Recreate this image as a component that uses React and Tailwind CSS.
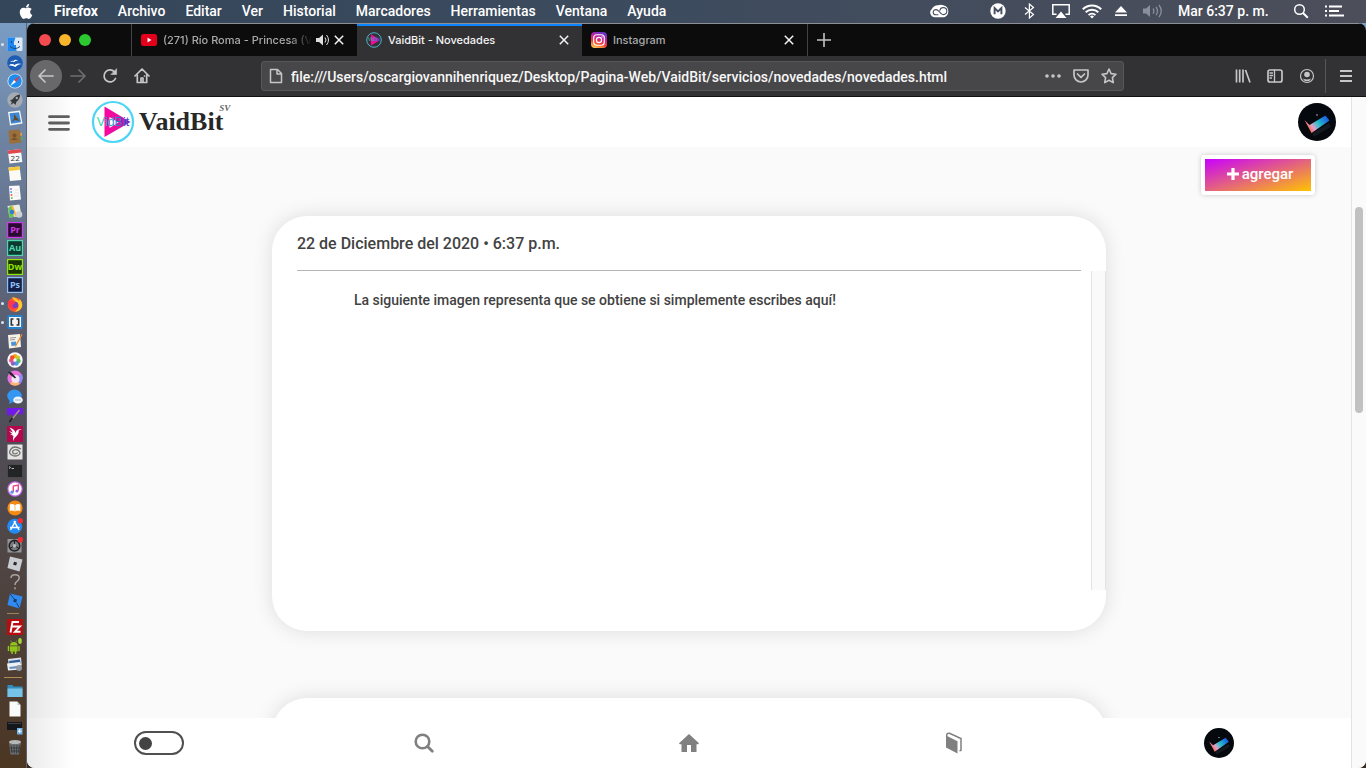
import React from "react";
import { FaApple } from "react-icons/fa";

/* ---------- menu bar ---------- */

const menus = ["Archivo", "Editar", "Ver", "Historial", "Marcadores", "Herramientas", "Ventana", "Ayuda"];

function StatusButton({ label, className, children }) {
  return (
    <button type="button" aria-label={label} className={`flex h-full items-center justify-center ${className}`}>
      {children}
    </button>
  );
}

function MenuBar() {
  return (
    <header className="flex h-[23px] shrink-0 items-center justify-between bg-linear-to-r from-[#34465a] via-[#3d4b5e] to-[#4c4e5a] pb-px font-[Roboto,sans-serif] text-sm font-medium text-white">
      <nav aria-label="Menú" className="flex items-center gap-5 pl-[18px]">
        <button type="button" aria-label="Apple" className="flex w-4 justify-center">
          <FaApple className="size-[17px]" />
        </button>
        <button type="button" className="font-bold leading-5">Firefox</button>
        {menus.map((m) => (
          <button type="button" key={m} className="leading-5">{m}</button>
        ))}
      </nav>
      <div className="flex h-full items-center pr-[22px]">
        <StatusButton label="Creative Cloud" className="w-[60px] justify-start!">
          <svg viewBox="0 0 20 14" className="h-[14px] w-5" fill="none" strokeLinecap="round">
            <path d="M5.500 13.200A4.800 4.800 0 0 1 2 4.700 6.500 6.500 0 0 1 8 1.200q3-.9 6 .3a6.200 6.200 0 0 1 .3 11.700z" fill="#fff" />
            <path d="M8 10.800H5.800a2.600 2.600 0 0 1 0-5.200q1.400 0 2.400 1l3 3q1 1 2.200 1a3.500 3.500 0 1 0-3.500-4.300" stroke="#465062" strokeWidth="1.100" />
          </svg>
        </StatusButton>
        <StatusButton label="Mega" className="w-[34px] justify-start!">
          <svg viewBox="0 0 16 16" className="size-4">
            <circle cx="8" cy="8" r="7.700" fill="#fff" />
            <path d="M4.600 11.200V5l3.400 3.400L11.400 5v6.200" fill="none" stroke="#454f60" strokeWidth="1.900" />
          </svg>
        </StatusButton>
        <StatusButton label="Bluetooth" className="w-[25px] justify-start!">
          <svg viewBox="0 0 11 16" className="h-4 w-[11px]" fill="none" stroke="currentColor" strokeWidth="1.200">
            <path d="M1 4.500 9.500 11.500 5.400 15V1l4.100 3.500L1 11.500" />
          </svg>
        </StatusButton>
        <StatusButton label="AirPlay" className="w-6">
          <svg viewBox="0 0 18 15" className="h-[15px] w-[18px]">
            <path d="M4.500 10.300H.800V.800h16.400v9.500h-3.700" fill="none" stroke="currentColor" strokeWidth="1.500" />
            <path d="M9 7.500 14.500 14h-11z" fill="currentColor" />
          </svg>
        </StatusButton>
        <StatusButton label="Wi-Fi" className="w-[38px]">
          <svg viewBox="0 0 20 15" className="h-[15px] w-5" fill="none" stroke="currentColor" strokeWidth="2">
            <path d="M.8 5.300a13 13 0 0 1 18.400 0M3.700 8.200a9 9 0 0 1 12.600 0M6.600 11.100a4.900 4.900 0 0 1 6.800 0" />
            <path d="m10 14.500-2-2a3 3 0 0 1 4 0z" fill="currentColor" stroke="none" />
          </svg>
        </StatusButton>
        <StatusButton label="Expulsar" className="w-5">
          <svg viewBox="0 0 12 12" className="size-3" fill="currentColor">
            <path d="m6 1 6 6.500H0zM0 9.300h12v1.800H0z" />
          </svg>
        </StatusButton>
        <StatusButton label="Volumen" className="w-[43px]">
          <svg viewBox="0 0 22 14" className="h-[14px] w-[22px] text-[#87909c]">
            <path d="M1 4.500h3L8 1v12L4 9.500H1z" fill="currentColor" />
            <path d="M11 4.500q1.800 2.500 0 5M14 2.800q3 4.200 0 8.400M17 1q4.500 6 0 12" fill="none" stroke="currentColor" strokeWidth="1.300" />
          </svg>
        </StatusButton>
        <span className="w-[112px] whitespace-nowrap pl-1 leading-5">Mar 6:37 p. m.</span>
        <StatusButton label="Buscar" className="w-[30px]">
          <svg viewBox="0 0 16 16" className="size-4" fill="none" stroke="currentColor" strokeWidth="1.500">
            <circle cx="6.500" cy="6.500" r="4.800" />
            <path d="m10 10 4.800 4.800" strokeWidth="2" />
          </svg>
        </StatusButton>
        <StatusButton label="Centro de notificaciones" className="w-7 justify-end!">
          <svg viewBox="0 0 19 12" className="h-3 w-[19px]" fill="currentColor">
            <path d="M0 .5h2v2H0zM0 5h2v2H0zM0 9.500h2v2H0zM4 .5h13v2H4zM4 5h10v2H4zM4 9.500h15v2H4z" />
          </svg>
        </StatusButton>
      </div>
    </header>
  );
}

/* ---------- dock ---------- */

function Adobe({ text, color, bg }) {
  return (
    <>
      <rect x=".6" y=".6" width="14.800" height="14.800" fill={bg} stroke={color} strokeWidth="1.200" />
      <text x="8" y="11.300" fontSize="9" fontWeight="700" fontFamily="Open Sans, sans-serif" textAnchor="middle" fill={color}>{text}</text>
    </>
  );
}

const Badge = () => <circle cx="13.300" cy="2.700" r="2.700" fill="#f32c36" />;

const dockTop = [
  ["Finder", <><rect x=".5" y="1.500" width="15" height="13.500" rx="1" fill="#dce9f5" /><path d="M.5 1.500h8Q6.500 6 7 9h2q-.3 3 .7 6H.5z" fill="#1e86f0" /><path d="M3 10.500q5 4 10 0" stroke="#164a80" fill="none" /><path d="M4.500 5v2M11.500 5v2" stroke="#164a80" /></>, true],
  ["OpenOffice", <><circle cx="8" cy="8" r="7.800" fill="#1d5cb5" /><path d="M3 7q2-2 3.500-1Q8 4 11 5.500 8 5.500 7 7 5 6 3 7m-1.500 3.500Q5 8 7.500 10 10 7.500 15 9q-4 0-6.500 3Q5.500 10 1.500 10.500" fill="#fff" /></>],
  ["Safari", <><circle cx="8" cy="8" r="7.600" fill="#dbe1e8" /><circle cx="8" cy="8" r="6.700" fill="#1f8df0" /><path d="M13 3 9 9 7 7z" fill="#f0353a" /><path d="m3 13 4-6 2 2z" fill="#fff" /></>],
  ["Launchpad", <><circle cx="8" cy="8" r="7.700" fill="#a5abb1" /><path d="M13 2.500Q8 3 6 7L3 8.500 5 10l-1.500 3L6.500 11l2 2 .8-3Q13 7 13 2.500" fill="#33383d" /><circle cx="9.800" cy="6" r="1.200" fill="#a5abb1" /></>],
  ["Mail", <><path d="m1 2 12-1.500 2.500 13L3 15.500z" fill="#f6f7f7" /><path d="m2.500 3.300 9.500-1 2 10-10 1.500z" fill="#3f87d1" /><path d="m7 4 3 4 3 3-5-1-4 2 3-3z" fill="#634a2b" /></>],
  ["Contactos", <><path d="m1.500 1.500 11-1 2 13-12 1.500z" fill="#9b6e3d" /><path d="m13 4 2-.3v3l-1.500.3z" fill="#d99c40" /><path d="m13.500 8 2-.2v3l-1.500.2z" fill="#58ad5a" /><circle cx="7.500" cy="6.500" r="2" fill="#76502b" /><path d="M4 11q3-4 7 0z" fill="#76502b" /></>],
  ["Calendario", <><path d="m.8 2.500 13-1.500 1.500 13L2.500 15.500z" fill="#f8f8f8" /><path d="m.8 2.500 13-1.500.5 3.500-13 1.500z" fill="#e0464b" /><text x="8.200" y="13" fontSize="8" fontFamily="Open Sans, sans-serif" textAnchor="middle" fill="#333">22</text></>],
  ["Notas", <><path d="m1.500 1.500 11-1 1.800 13.500-11.300 1z" fill="#fbfaf5" /><path d="m1.500 1.500 11-1 .5 3.200-11 1.200z" fill="#f6c936" /></>],
  ["Recordatorios", <><path d="m2 1 10.500-.5 1.500 14-11 1z" fill="#fafafa" /><g><circle cx="4" cy="4" r="1" fill="#a56bd8" /><circle cx="4.200" cy="7" r="1" fill="#48a7f0" /><circle cx="4.500" cy="10" r="1" fill="#f25b38" /><circle cx="4.800" cy="13" r="1" fill="#70bf50" /></g><path d="M7 5h5M7 8h5M7 11h5" stroke="#ddd" strokeWidth=".7" /></>],
  ["Mapas", <><path d="m.5 3 12-1.500 2 11.500-12 1.500z" fill="#e9eee2" /><path d="m1 5 4-3 2 12-5 .5z" fill="#6ac25d" /><path d="m5 3 4 10" stroke="#f6b23c" strokeWidth="2" /><circle cx="5" cy="9" r="2.200" fill="#327bdc" /><circle cx="12" cy="11.500" r="3.300" fill="#cdd1d3" /></>],
  ["Premiere Pro", <Adobe text="Pr" color="#d23be8" bg="#2b0b33" />],
  ["Audition", <Adobe text="Au" color="#4fd6ac" bg="#0c3a31" />],
  ["Dreamweaver", <Adobe text="Dw" color="#91e500" bg="#183204" />],
  ["Photoshop", <Adobe text="Ps" color="#8fc0f5" bg="#14204a" />],
  ["Firefox", <><circle cx="8" cy="8.700" r="7.200" fill="#ff5630" /><path d="M5 1Q11 2 12 5.500L12.500 3q3 3 2.700 7Q14 15 8 15.800 14 11 10 6.500 6 4 5 1" fill="#ffca28" /><circle cx="8" cy="9" r="3.300" fill="#7440c4" /><path d="M1 5q3-1 5 .5l3 1.500-3 1Q5 12 8 13 3 14 1.500 9z" fill="#ff3647" /></>, true],
  ["Brackets", <><rect x=".3" y="1" width="15.400" height="14" rx="1.500" fill="#2582cc" /><rect x="2" y="3" width="12" height="10" fill="#f4f4f4" /><path d="M6.500 5H4.300v6h2.200M9.500 5h2.200v6H9.500" stroke="#333" strokeWidth="1.600" fill="none" /></>, true],
  ["Pages", <><path d="m1 2 12-1 1 13-12 1.500z" fill="#f6f2e8" /><path d="m3 5 6-.5M3 7l5-.5" stroke="#999" /><path d="m4 9 5-.5.5 4-5 .5z" fill="#4795dd" /><path d="m14.500 1-6 11-1 2 2-1.300 6-11z" fill="#f28a24" /></>],
  ["Fotos", <><circle cx="8" cy="8" r="7.700" fill="#fafafa" /><circle cx="8" cy="4.300" r="2.300" fill="#f8a51b" /><circle cx="11" cy="5.800" r="2.200" fill="#c8ca32" /><circle cx="11.500" cy="9" r="2.200" fill="#5cbd5d" /><circle cx="9.500" cy="11.500" r="2.200" fill="#46a1dd" /><circle cx="6" cy="11.500" r="2.200" fill="#8561c5" /><circle cx="4.200" cy="8.500" r="2.200" fill="#e65192" /><circle cx="5.200" cy="5.500" r="2.200" fill="#ef5133" /></>],
  ["Krita", <><circle cx="8" cy="8" r="7.600" fill="#e873dd" /><path d="M8 8 3 14Q8 17.500 13 14z" fill="#ffb46c" /><path d="M8 8l5 6q4-5 2-10z" fill="#8e8bf5" /><circle cx="8.500" cy="9" r="4" fill="#efe5f5" /><path d="m1 1.500 3.500 1L9 7.500l-1 1-5-4z" fill="#222" /></>],
  ["Mensajes", <><ellipse cx="7.500" cy="7" rx="7.300" ry="6.500" fill="#3496f1" /><path d="m3 11-1 4 4-2z" fill="#3496f1" /><ellipse cx="11" cy="11" rx="4.800" ry="3.500" fill="#f2f3f6" /><path d="M8.500 11h1m1 0h1m1 0h1" stroke="#4882b5" strokeWidth="1.200" /></>],
  ["Pintura", <><path d="M0 1h16v6q-1 2-2 0-2-1-3 1-2-3-4 0-1 2-2 0-1-2-2 0-2 2-3-1z" fill="#7118ec" /><path d="m12.500 3-9 11" stroke="#a79284" strokeWidth="1.500" /><path d="m5.500 11-3 4" stroke="#222" strokeWidth="2" /></>],
  ["Colibrí", <><path d="M0 0h16v16H0z" fill="#b6064d" /><path d="M2.500 1.500Q8 3 8.500 7q.5-3 2.500-3.500l4-.5-3.300 1.500Q12 8 9 10.500q-2 1.500-3 4.500-.3-3 .5-5L3 8l2.500.3L2 5l4 1.500z" fill="#fff" /></>],
  ["Espiral", <><path d="M.5.5h15v15H.500z" fill="#e3e3e0" /><path d="M14 5Q7 1 4 5q-4 5 3 7 6 0 6-3.500Q11 4.500 7 6q-3 2 0 3.800 3 .3 3.500-1.300" fill="none" stroke="#737373" strokeWidth="1.300" /></>],
  ["Terminal", <><rect x=".5" y="1.500" width="15" height="13" fill="#222426" stroke="#555" strokeWidth=".6" /><path d="m2 3.500 1.500 1L2 5.500m2.500 0H7" stroke="#ddd" strokeWidth=".8" fill="none" /></>],
  ["iTunes", <><circle cx="8" cy="8" r="7.700" fill="#c069e4" /><circle cx="8" cy="8" r="6.500" fill="#fff" /><path d="M6.300 11V5l5-1v5.500" fill="none" stroke="#eb4384" strokeWidth="1.400" /><circle cx="5" cy="11.200" r="1.600" fill="#5198f5" /><circle cx="10" cy="10" r="1.600" fill="#a45bea" /></>],
  ["Libros", <><circle cx="8" cy="8" r="7.600" fill="#f58a13" /><path d="M2.800 4.500Q6 3.500 7.700 5v6.500Q5 10 2.800 11zm5.500.5q2-1.500 5-.5V11q-3-1-5 .5z" fill="#fff" /></>],
  ["App Store", <><circle cx="7.700" cy="8.300" r="7.500" fill="#238bf3" /><path d="m8.500 3-5 9M7 3l5 9M3 9.500h9.500" stroke="#fff" strokeWidth="1.500" /><Badge /></>],
  ["Preferencias", <><path d="M.5 2h14v13.500H.500z" fill="#929698" /><circle cx="7.500" cy="8.700" r="5.300" fill="#777b7d" stroke="#222" strokeWidth="1.600" /><path d="M7.500 8.700V3.500m0 5.200L3 11.500m4.500-2.800 4.500 2.800" stroke="#222" /><circle cx="7.500" cy="8.700" r="1.700" fill="#bbb" /><Badge /></>],
  ["Roblox", <><path d="m3 .5 12.500 3L12.500 15.500.500 12z" fill="#c9ccd1" /><path d="m7 5.800 3 .8-.8 3-3-.8z" fill="#262626" /></>],
  ["Desconocido", <path d="M4 4q0-3.200 4-3.200 4.200 0 4.200 3Q12.200 6 10 7.300 8 8.500 8 11m0 2.300v2" fill="none" stroke="#aaa49f" strokeWidth="1.500" />],
  ["Roblox Studio", <><path d="m3 .5 12.500 3L12.500 15.500.500 12z" fill="#308af2" /><path d="m3 .8 4.500 5.500m2 3.500 3 5.500" stroke="#17426e" /><path d="m7 5.800 3 .8-.8 3-3-.8z" fill="#173c67" /></>],
];

const dockMiddle = [
  ["FileZilla", <><path d="M0 0h16v16H0z" fill="#b80c10" /><path d="M3.500 13.500 5.500 3h6.500M4.800 7.500h4M8 7.500h5L8 12.700h5.500" fill="none" stroke="#fff" strokeWidth="1.900" /></>],
  ["Android", <><path d="M3 7.500a3.800 3.500 0 0 1 7.600 0zM3 8.200h7.600v5.300h-1.300V16H7.800v-2.500h-2V16H4.300v-2.500H3z" fill="#91c51b" /><path d="M1.500 8.500v4M12 8.500v4" stroke="#91c51b" strokeWidth="1.500" strokeLinecap="round" /><path d="m4.500 4-.8-1.300M9 4l.8-1.300" stroke="#91c51b" strokeWidth=".7" /><ellipse cx="13" cy="3" rx="1.800" ry="3" fill="#a8d53a" /></>],
  ["Imágenes", <><path d="m1 3 13-1.500.8 8L2 11z" fill="#d9dfe8" /><path d="m2 5 11-1.500.5 4L2.500 9z" fill="#345e9e" /><path d="M0 7.500 13 6l1 7.500-13 1z" fill="#edf0f4" /><path d="m2 11 10-1.300v2.500L3 13z" fill="#6b91c0" /><circle cx="12" cy="12" r="3" fill="#929aa5" /></>],
];

const dockBottom = [
  ["Carpeta", <><path d="M.5 2h5l1 1.500h9V14H.500z" fill="#338cbd" /><path d="M.5 5.500h15V14H.500z" fill="#76c3e7" /></>],
  ["Documento", <><path d="M2.500.5h7.800L13.500 4v11.500h-11z" fill="#fafafa" /><path d="M10.300.5V4h3.200z" fill="#c8c8c8" /></>],
  ["Ventana", <><path d="M0 2h15v8H0z" fill="#14181c" /><path d="M1 3.500h13" stroke="#3d4248" /><rect x="10" y="8" width="5.500" height="6.500" fill="#6eb2e8" /><path d="M12.700 9v4M11 11.200h3.500" stroke="#fff" /></>],
  ["Papelera", <><path d="m2 3 1.500 12.500h8.500L14 3z" fill="#6a6e70" /><ellipse cx="8" cy="3" rx="6" ry="2" fill="#b5b8b8" /><path d="m4 6 1 8M7 6l.3 8.500M10 6l-.5 8.500M12.500 6l-1 8M3 9h10M3.500 12h9" stroke="#2b2e30" strokeWidth=".7" /></>],
];

function DockItems({ items }) {
  return items.map(([name, art, running]) => (
    <button type="button" key={name} aria-label={name} className="flex min-h-0 w-full flex-1 items-center gap-[3px] pl-px">
      <span className={`size-[3px] shrink-0 rounded-full ${running ? "bg-[#dbe6f0]" : ""}`} />
      <svg viewBox="0 0 16 16" className="size-4 shrink-0 overflow-visible">{art}</svg>
    </button>
  ));
}

function Dock() {
  return (
    <aside
      aria-label="Dock"
      className="flex w-[27px] shrink-0 flex-col border-r border-[#5b6470] bg-linear-to-b from-[#7a9cc3] from-0% via-[#51505e] via-50% to-[#4b3622] to-100% py-3"
    >
      <DockItems items={dockTop} />
      <div className="flex h-2 items-center pl-[7px]"><span className="h-px w-3 bg-[#a18158]" /></div>
      <DockItems items={dockMiddle} />
      <div className="flex h-2 items-center pl-1"><span className="h-px w-[18px] bg-[#b28d55]" /></div>
      <DockItems items={dockBottom} />
    </aside>
  );
}

/* ---------- browser chrome ---------- */

const Close = () => (
  <svg viewBox="0 0 10 10" className="size-2.5" stroke="currentColor" strokeWidth="1.500">
    <path d="m.8.8 8.400 8.400M9.200.8.800 9.200" />
  </svg>
);

function VaidMark({ className, large }) {
  return (
    <svg viewBox="0 0 44 44" className={className}>
      <defs>
        <linearGradient id="vaidTri" x1="0" x2="1">
          <stop offset="0" stopColor="#fb059f" />
          <stop offset=".6" stopColor="#e4129f" />
          <stop offset="1" stopColor="#6b2cc8" />
        </linearGradient>
        <linearGradient id="vaidWord" x1="0" x2="1">
          <stop offset="0" stopColor="#35e58b" />
          <stop offset=".35" stopColor="#2fa5d8" />
          <stop offset="1" stopColor="#3f3fcf" />
        </linearGradient>
      </defs>
      <circle cx="22" cy="22" r="20" fill="none" stroke="#4cd5f4" strokeWidth="2.200" />
      <path d="M13.500 6.500 39.500 22 13.500 37z" fill="url(#vaidTri)" />
      {large && <path d="M18.500 17v11l9-5.500z" fill="#fff" />}
      <text x="22" y="26" textAnchor="middle" fontSize="12.500" fontFamily="Liberation Sans, sans-serif" fill="url(#vaidWord)">VidBit</text>
    </svg>
  );
}

function Tab({ icon, title, active, audio }) {
  return (
    <div className={`flex w-[225px] items-center border-t-2 pb-0.5 pl-[9px] pr-[13px] ${active ? "border-[#0a84ff] bg-[#323234] text-[#f4f4f4]" : "border-transparent text-[#aaaaac]"}`}>
      <button type="button" className="flex min-w-0 flex-1 items-center gap-1.5 text-left text-[11px] font-medium leading-4">
        {icon}
        <span className={`min-w-0 flex-1 whitespace-nowrap ${audio ? "mask-r-from-85%" : ""}`}>{title}</span>
      </button>
      {audio && (
        <button type="button" aria-label="Silenciar" className="mx-1 text-[#dddddf]">
          <svg viewBox="0 0 14 12" className="h-3 w-[14px]">
            <path d="M0 4h3l4-3.500v11L3 8H0z" fill="currentColor" />
            <path d="M9 3.500q2 2.500 0 5M10.500 1q4 5 0 10" fill="none" stroke="currentColor" />
          </svg>
        </button>
      )}
      <button type="button" aria-label="Cerrar pestaña" className="text-[#f4f4f4]"><Close /></button>
    </div>
  );
}

const YouTube = () => (
  <svg viewBox="0 0 16 12" className="h-3 w-4 shrink-0">
    <rect width="16" height="12" rx="2.500" fill="#e4001b" />
    <path d="M6.500 3.500v5l4-2.500z" fill="#fff" />
  </svg>
);

const Instagram = () => (
  <svg viewBox="0 0 16 16" className="size-4 shrink-0">
    <defs>
      <linearGradient id="insta" x1=".2" y1="1" x2=".6" y2="0">
        <stop offset="0" stopColor="#ffd34f" />
        <stop offset=".35" stopColor="#f24435" />
        <stop offset=".65" stopColor="#cc1e98" />
        <stop offset="1" stopColor="#6635c8" />
      </linearGradient>
    </defs>
    <rect width="16" height="16" rx="3.800" fill="url(#insta)" />
    <rect x="2.700" y="2.700" width="10.600" height="10.600" rx="3" fill="none" stroke="#fff" strokeWidth="1.100" />
    <circle cx="8" cy="8" r="2.600" fill="none" stroke="#fff" strokeWidth="1.200" />
    <circle cx="11.100" cy="4.900" r=".7" fill="#fff" />
  </svg>
);

function TabBar() {
  return (
    <div className="flex h-[33px] border-t border-[#8c9095] bg-[#0c0c0d]">
      <div className="flex w-[105px] items-center gap-2 border-r border-[#444446] pl-3">
        <button type="button" aria-label="Cerrar" className="size-3 rounded-full bg-[#f34b50]" />
        <button type="button" aria-label="Minimizar" className="size-3 rounded-full bg-[#f7b52c]" />
        <button type="button" aria-label="Maximizar" className="size-3 rounded-full bg-[#2bc82f]" />
      </div>
      <Tab icon={<YouTube />} title="(271) Río Roma - Princesa (V" audio />
      <Tab icon={<VaidMark className="size-4 shrink-0" />} title="VaidBit - Novedades" active />
      <Tab icon={<Instagram />} title="Instagram" />
      <button type="button" aria-label="Nueva pestaña" className="flex w-8 items-center justify-center border-l border-[#444446] text-[#c4c4c6]">
        <svg viewBox="0 0 14 14" className="size-[14px]" stroke="currentColor" strokeWidth="1.600"><path d="M7 0v14M0 7h14" /></svg>
      </button>
    </div>
  );
}

function ToolButton({ label, className, children }) {
  return (
    <button type="button" aria-label={label} className={`flex h-8 w-8 shrink-0 items-center justify-center ${className ?? ""}`}>
      <svg viewBox="0 0 16 16" className="size-4" fill="none" stroke="currentColor" strokeWidth="1.700" strokeLinecap="round" strokeLinejoin="round">
        {children}
      </svg>
    </button>
  );
}

function ToolBar() {
  return (
    <div className="flex h-[41px] items-center border-b border-[#111] bg-[#323234] pl-[3px] pr-1 text-[#c6c6c8]">
      <ToolButton label="Atrás" className="rounded-full bg-[#68686a]"><path d="M15 8H1.500M7 2 1 8l6 6" /></ToolButton>
      <ToolButton label="Adelante" className="text-[#6d6d6f]"><path d="M1 8h13.500M9 2l6 6-6 6" /></ToolButton>
      <ToolButton label="Recargar">
        <path d="M13.500 10.500A6 6 0 1 1 12.300 3.700" /><path d="M14.600 1v5.500H9.200z" fill="currentColor" strokeWidth=".6" />
      </ToolButton>
      <ToolButton label="Inicio">
        <path d="m1 8 7-7 7 7M3.300 7v7.500h9.400V7" /><path d="M7 14v-4h2v4M10.500 8h.1" />
      </ToolButton>
      <div className="mx-[103px] flex h-[30px] min-w-0 flex-1 items-center rounded-[3px] border border-[#58585b] bg-[#474749] px-1.5">
        <svg viewBox="0 0 16 16" className="size-4 shrink-0" fill="none" stroke="currentColor" strokeWidth="1.500">
          <path d="M2.500 1.500h7l4 4v9h-11zM9 1.500V6h4.500" strokeLinejoin="round" />
        </svg>
        <input
          aria-label="Dirección"
          className="ml-[7px] min-w-0 flex-1 bg-transparent pt-px font-[Roboto,sans-serif] text-sm font-medium text-[#f7f7f7] outline-none"
          defaultValue="file:///Users/oscargiovannihenriquez/Desktop/Pagina-Web/VaidBit/servicios/novedades/novedades.html"
        />
        <div className="flex items-center gap-3">
          <button type="button" aria-label="Acciones de página">
            <svg viewBox="0 0 16 16" className="size-4" fill="currentColor"><circle cx="2" cy="8" r="1.800" /><circle cx="8" cy="8" r="1.800" /><circle cx="14" cy="8" r="1.800" /></svg>
          </button>
          <button type="button" aria-label="Guardar en Pocket">
            <svg viewBox="0 0 16 16" className="size-4" fill="none" stroke="currentColor" strokeWidth="1.700" strokeLinecap="round" strokeLinejoin="round"><path d="M1 2h14v5a7 7 0 0 1-14 0zM4.500 6 8 9.300 11.500 6" /></svg>
          </button>
          <button type="button" aria-label="Marcar página">
            <svg viewBox="0 0 16 16" className="size-4" fill="none" stroke="currentColor" strokeWidth="1.600" strokeLinejoin="round"><path d="m8 1 2.100 4.600 4.900.6-3.600 3.400.9 5L8 12.200l-4.300 2.400.9-5L1 6.200l4.900-.6z" /></svg>
          </button>
        </div>
      </div>
      <ToolButton label="Biblioteca"><path d="M1.500 1.500v13M4.700 1.500v13M8 1.500v13M10.500 2l4.500 12.500" strokeLinecap="butt" /></ToolButton>
      <ToolButton label="Barra lateral"><rect x="1" y="2" width="14" height="12" rx="2" /><path d="M7.500 2v12M3 5h2.500M3 7.500h2.500M3 10h1.500" strokeWidth="1.300" /></ToolButton>
      <ToolButton label="Cuenta">
        <circle cx="8" cy="8" r="6.500" strokeWidth="1.200" /><circle cx="8" cy="6.500" r="2.800" fill="currentColor" stroke="none" /><path d="M3.800 10.500q4.200 1.800 8.400 0Q11 13.300 8 13.300t-4.200-2.800" fill="currentColor" stroke="none" />
      </ToolButton>
      <span className="ml-0.5 mr-1 h-[34px] w-px bg-[#57575a]" />
      <ToolButton label="Abrir menú"><path d="M2 3h12M2 8h12M2 13h12" strokeLinecap="butt" strokeWidth="2" /></ToolButton>
    </div>
  );
}

/* ---------- web page ---------- */

function Avatar({ className }) {
  return (
    <svg viewBox="0 0 38 38" className={className}>
      <defs>
        <linearGradient id="avatarGlow" x1="0" y1=".6" x2="1" y2=".1">
          <stop offset="0" stopColor="#ff5a2c" />
          <stop offset=".25" stopColor="#e0a0cc" />
          <stop offset=".5" stopColor="#24c0c8" />
          <stop offset="1" stopColor="#1746e8" />
        </linearGradient>
      </defs>
      <circle cx="19" cy="19" r="19" fill="#05080d" />
      <path d="m15 32 17-10" stroke="#14191f" strokeWidth="4" />
      <path d="m6.500 17 5 5L27.500 12.500l4 5L13.500 30z" fill="url(#avatarGlow)" />
      <path d="M18 12h2" stroke="#aaa" />
    </svg>
  );
}

function Card({ date, children }) {
  return (
    <article className="w-[63%] shrink-0 rounded-[35px] bg-white pb-[41px] shadow-[0_0_20px_rgba(0,0,0,0.12)]">
      <h2 className="mx-[25px] flex h-[55px] items-center border-b border-[#b5b5b5] pt-px text-base font-medium">{date}</h2>
      <div className="flex h-[319px]">
        <div className="min-w-0 flex-1 pl-[82px] pt-[19px]">{children}</div>
        <div className="w-[15px] border-x border-[#e4e4e4] bg-[#fafafa]" />
      </div>
    </article>
  );
}

function Page() {
  return (
    <div className="flex min-h-0 flex-1 bg-white font-[Roboto,sans-serif] text-[#424242]">
      <div className="relative flex min-w-0 flex-1 flex-col">
        <header className="flex h-[50px] shrink-0 items-center bg-white pl-[21px] pr-[15px]">
          <button type="button" aria-label="Menú" className="mr-[21px] mt-0.5">
            <svg viewBox="0 0 22 18" className="h-[18px] w-[22px]" stroke="#616161" strokeWidth="2.800" strokeLinecap="round"><path d="M1.500 2.700h19M1.500 9h19M1.500 15.300h19" /></svg>
          </button>
          <a href="#inicio" className="flex items-center">
            <VaidMark className="size-11" large />
            <span className="ml-1 font-['Liberation_Serif',serif] text-[26px] font-bold leading-8 text-[#282828]">VaidBit</span>
            <span className="-ml-1 mb-7 font-['Liberation_Serif',serif] text-[9px] font-bold italic leading-3 text-[#666]">SV</span>
          </a>
          <button type="button" aria-label="Perfil" className="ml-auto"><Avatar className="size-[38px]" /></button>
        </header>

        <main className="flex min-h-0 flex-1 flex-col items-center overflow-hidden bg-[#fafafa]">
          <button type="button" className="mr-9 mt-2 flex h-10 w-[114px] shrink-0 items-center justify-center gap-[3px] self-end rounded-[4px] border-4 border-white bg-linear-to-br/srgb from-[#c800ff] to-[#ffc400] bg-origin-padding pb-0.5 pl-1 text-[15px] font-medium text-white shadow-[0_0_5px_rgba(0,0,0,0.2)]">
            <svg viewBox="0 0 12 12" className="size-3 shrink-0" stroke="currentColor" strokeWidth="3.200"><path d="M6 0v12M0 6h12" /></svg>
            agregar
          </button>
          <div className="h-[21px] shrink-0" />
          <Card date="22 de Diciembre del 2020 • 6:37 p.m.">
            <p className="text-sm font-medium leading-5">La siguiente imagen representa que se obtiene si simplemente escribes aquí!</p>
          </Card>
          <div className="h-[67px] shrink-0" />
          <Card />
        </main>

        <nav aria-label="Navegación" className="grid h-[50px] shrink-0 grid-cols-5 items-center justify-items-center bg-white text-[#808080]">
          <input
            type="checkbox"
            aria-label="Modo oscuro"
            className="flex h-6 w-[50px] appearance-none items-center rounded-full border-2 border-[#505050] pl-[3px] before:size-[13px] before:rounded-full before:bg-[#434343]"
          />
          <a href="#buscar" aria-label="Buscar">
            <svg viewBox="0 0 20 20" className="size-5" fill="none" stroke="currentColor"><circle cx="8.500" cy="8.500" r="6.800" strokeWidth="2.600" /><path d="m13.500 13.500 4.800 4.800" strokeWidth="2.800" strokeLinecap="round" /></svg>
          </a>
          <a href="#inicio" aria-label="Inicio">
            <svg viewBox="0 0 20 18" className="h-[18px] w-5" fill="currentColor"><path d="M10 0 20 9.200l-.8 1H17.500V18H12v-7H8v7H2.500v-7.800H.800l-.8-1z" /></svg>
          </a>
          <a href="#libros" aria-label="Libros">
            <svg viewBox="0 0 18 22" className="h-[22px] w-[18px]"><path d="M1 3.500 12.500 9.300V21.500L1 15.500z" fill="currentColor" /><path d="M1.700 5V3.500Q1.700.8 4.500 1.200L16 6.500v12l-1.500.3" fill="none" stroke="currentColor" strokeWidth="1.500" /></svg>
          </a>
          <button type="button" aria-label="Perfil"><Avatar className="size-[30px]" /></button>
        </nav>
        <div className="pointer-events-none absolute inset-y-0 left-0 w-12 bg-linear-to-r from-black/8 to-transparent" />
      </div>
      <div className="w-[15px] shrink-0 border-l border-[#e3e3e3] bg-[#fafafa] pl-[3px] pt-[110px]">
        <div className="h-[206px] w-2 rounded-full bg-[#c1c1c1]" />
      </div>
    </div>
  );
}

export default function App() {
  return (
    <div className="flex h-screen flex-col overflow-hidden bg-[#3a2a22] font-[Inter,sans-serif]">
      <MenuBar />
      <div className="flex min-h-0 flex-1 bg-linear-to-b from-[#7a9cc3] to-[#3a2a22]">
        <Dock />
        <div className="flex min-w-0 flex-1 flex-col overflow-hidden rounded-lg">
          <TabBar />
          <ToolBar />
          <Page />
        </div>
      </div>
    </div>
  );
}
